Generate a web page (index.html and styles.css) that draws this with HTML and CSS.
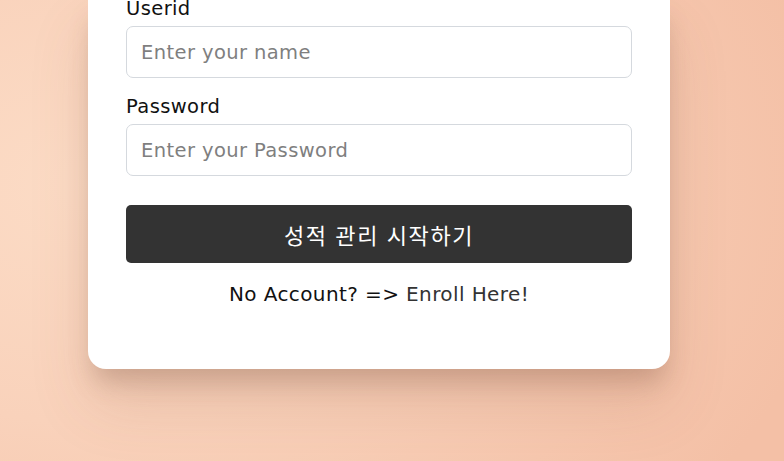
FILE: index.html
```html
<!DOCTYPE html>
<html lang="ko">
<head>
<meta charset="utf-8">
<link rel="stylesheet" href="styles.css">
</head>
<body>
<main class="page">
  <form class="card">
    <label class="field">
      <span class="label">Userid</span>
      <input class="input" type="text" placeholder="Enter your name">
    </label>
    <label class="field">
      <span class="label">Password</span>
      <input class="input" type="password" placeholder="Enter your Password">
    </label>
    <button class="btn" type="button">성적 관리 시작하기</button>
    <p class="enroll">No Account? =&gt; <a class="link" href="#">Enroll Here!</a></p>
  </form>
</main>
</body>
</html>
```
FILE: styles.css
```css
* { box-sizing: border-box; }
html, body { margin: 0; height: 100%; }
body {
  font-family: "DejaVu Sans", "Noto Sans CJK KR", sans-serif;
  letter-spacing: 0.4px;
  background: radial-gradient(ellipse 95% 115% at 12% 40%, #fcdcc6 0%, #f9d2bb 45%, #f4c0a6 100%);
  overflow: hidden;
}
.page {
  padding-left: 88px;
  margin-top: -5px;
}
.card {
  width: 582px;
  background: #fff;
  border-radius: 0 0 18px 18px;
  padding: 0 38px 61px;
  box-shadow: 0 18px 24px -6px rgba(120, 80, 60, 0.28), 0 36px 60px rgba(150, 90, 60, 0.16);
  display: flex;
  flex-direction: column;
}
.field { display: flex; flex-direction: column; margin-bottom: 15px; }
.label {
  font-size: 19.5px;
  line-height: 28px;
  color: #111;
  margin-bottom: 3px;
}
.input {
  height: 52px;
  border: 1px solid #d5d9de;
  border-radius: 7px;
  padding: 0 14px;
  font: inherit;
  font-size: 19.5px;
  letter-spacing: 0.4px;
  color: #222;
  outline: none;
}
.input::placeholder { color: #7f7f7f; }
.btn {
  margin-top: 14px;
  height: 58px;
  border: 0;
  border-radius: 5px;
  background: #333333;
  color: #fff;
  font-family: "Noto Sans CJK KR", sans-serif;
  font-size: 22px;
  letter-spacing: 1.6px;
}
.enroll {
  margin: 17px 0 0;
  text-align: center;
  font-size: 20px;
  line-height: 28px;
  color: #111;
}
.link { color: #333; text-decoration: none; }
```
